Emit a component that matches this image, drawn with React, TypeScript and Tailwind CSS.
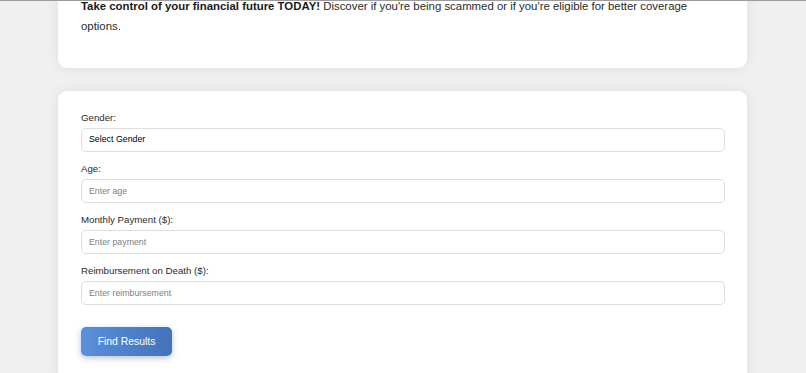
import React from "react";

const font = { fontFamily: '"Liberation Sans", Arial, Helvetica, sans-serif' };

function Field({ label, placeholder }: { label: string; placeholder: string }) {
  return (
    <div className="flex flex-col">
      <label className="text-[9.7px] leading-[15px] text-[#2b2b2b] mb-[3px]">{label}</label>
      <input
        type="text"
        placeholder={placeholder}
        className="h-[24px] w-full rounded-[5px] border border-[#dedede] bg-white px-[7px] text-[8.8px] text-[#333] placeholder:text-[#808080] outline-none"
      />
    </div>
  );
}

export default function App() {
  return (
    <div className="min-h-[373px] bg-[#f0f0f0] overflow-hidden" style={font}>
      <div className="h-px bg-[#9b9b9b] relative z-10" />

      {/* intro card */}
      <div className="ml-[58px] mt-[-25px] w-[689px] rounded-[9px] bg-white px-[23px] pt-[20px] pb-[32px] shadow-[0_0_14px_rgba(0,0,0,0.08)]">
        <p className="text-[11.4px] leading-[20px] text-[#2b2b2b]">
          <strong className="font-bold text-[#1a1a1a]">Take control of your financial future TODAY!</strong>{" "}
          Discover if you're being scammed or if you're eligible for better coverage options.
        </p>
      </div>

      {/* form card */}
      <div className="ml-[58px] mt-[23px] w-[689px] rounded-[9px] bg-white pr-[22px] pl-[23px] pt-[19px] pb-[30px] shadow-[0_0_14px_rgba(0,0,0,0.08)]">
        <div className="flex flex-col gap-[9px]">
          <div className="flex flex-col">
            <label className="text-[9.7px] leading-[15px] text-[#2b2b2b] mb-[3px]">Gender:</label>
            <select
              defaultValue=""
              className="h-[24px] w-full appearance-none rounded-[5px] border border-[#dedede] bg-white px-[7px] text-[8.8px] text-black outline-none"
            >
              <option value="">Select Gender</option>
              <option value="male">Male</option>
              <option value="female">Female</option>
            </select>
          </div>
          <Field label="Age:" placeholder="Enter age" />
          <Field label="Monthly Payment ($):" placeholder="Enter payment" />
          <Field label="Reimbursement on Death ($):" placeholder="Enter reimbursement" />
        </div>

        <button className="mt-[22px] h-[29px] w-[91px] rounded-[5px] bg-gradient-to-r from-[#5a8fda] to-[#4373ba] text-[10.4px] text-white shadow-[0_2px_6px_rgba(40,80,140,0.35)]">
          Find Results
        </button>
      </div>
    </div>
  );
}
